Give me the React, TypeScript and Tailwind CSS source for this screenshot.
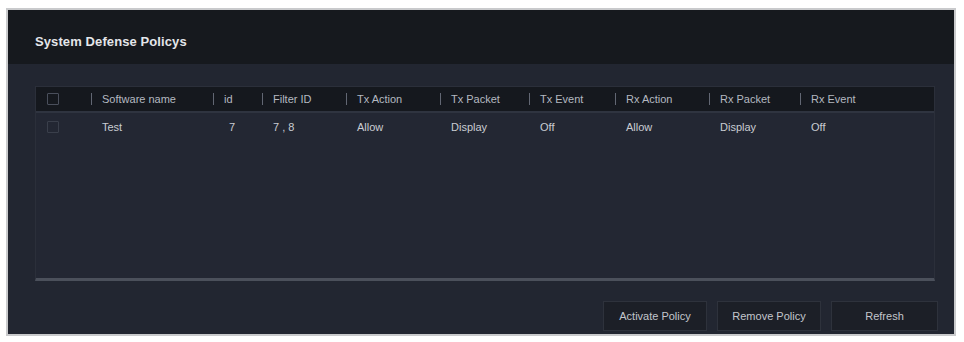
const columns = [
  { key: "name", label: "Software name", w: "w-[122px]" },
  { key: "id", label: "id", w: "w-[49px]" },
  { key: "filter", label: "Filter ID", w: "w-[84px]" },
  { key: "txa", label: "Tx Action", w: "w-[94px]" },
  { key: "txp", label: "Tx Packet", w: "w-[89px]" },
  { key: "txe", label: "Tx Event", w: "w-[86px]" },
  { key: "rxa", label: "Rx Action", w: "w-[94px]" },
  { key: "rxp", label: "Rx Packet", w: "w-[91px]" },
  { key: "rxe", label: "Rx Event", w: "w-[100px]" },
];

const rows = [
  { name: "Test", id: "7", filter: "7 , 8", txa: "Allow", txp: "Display", txe: "Off", rxa: "Allow", rxp: "Display", rxe: "Off" },
];

function Checkbox() {
  return <span className="block w-[12px] h-[12px] border border-[#4a4f5c] rounded-[1px]" />;
}

export default function App() {
  return (
    <div className="w-[964px] h-[342px] bg-white pt-[8px] pl-[6px] font-['Liberation_Sans',Arial,sans-serif]">
      <div className="w-[950px] h-[328px] border-2 border-[#c9cacc] bg-[#222631] flex flex-col">
        {/* title bar */}
        <div className="h-[54px] bg-[#16191e] flex items-center pl-[27px] pt-[10px]">
          <h1 className="text-[13px] font-bold text-[#e4e6ea] tracking-[0.1px]">System Defense Policys</h1>
        </div>

        {/* table */}
        <div className="ml-[27px] mr-[19px] mt-[22px] h-[195px] border border-[#2b2f3a] border-b-[3px] border-b-[#4b505b] flex flex-col bg-[#232733]">
          <div className="h-[26px] bg-[#15181e] flex items-center text-[11px] text-[#b4b8c0] border-b-2 border-[#2f3440]">
            <div className="w-[55px] pl-[11px] flex items-center">
              <Checkbox />
            </div>
            {columns.map((c) => (
              <div key={c.key} className={`${c.w} flex items-center`}>
                <span className="w-px h-[12px] bg-[#626773] mr-[10px]" />
                <span>{c.label}</span>
              </div>
            ))}
          </div>
          {rows.map((r, i) => (
            <div key={i} className="h-[28px] flex items-center text-[11px] text-[#c9ccd2]">
              <div className="w-[55px] pl-[11px] flex items-center">
                <span className="block w-[12px] h-[12px] border border-[#3a3f4b] rounded-[1px]" />
              </div>
              {columns.map((c) => (
                <div key={c.key} className={`${c.w} pl-[11px] ${c.key === "id" ? "pl-[16px]" : ""}`}>
                  {r[c.key as keyof typeof r]}
                </div>
              ))}
            </div>
          ))}
        </div>

        {/* actions */}
        <div className="flex justify-end gap-[10px] pr-[16px] mt-[20px]">
          {["Activate Policy", "Remove Policy", "Refresh"].map((b) => (
            <button
              key={b}
              className={`h-[30px] ${b === "Refresh" ? "w-[107px]" : "w-[104px]"} bg-[#1c1f27] border border-[#2e323c] text-[11px] text-[#c3c6cc]`}
            >
              {b}
            </button>
          ))}
        </div>
      </div>
    </div>
  );
}
